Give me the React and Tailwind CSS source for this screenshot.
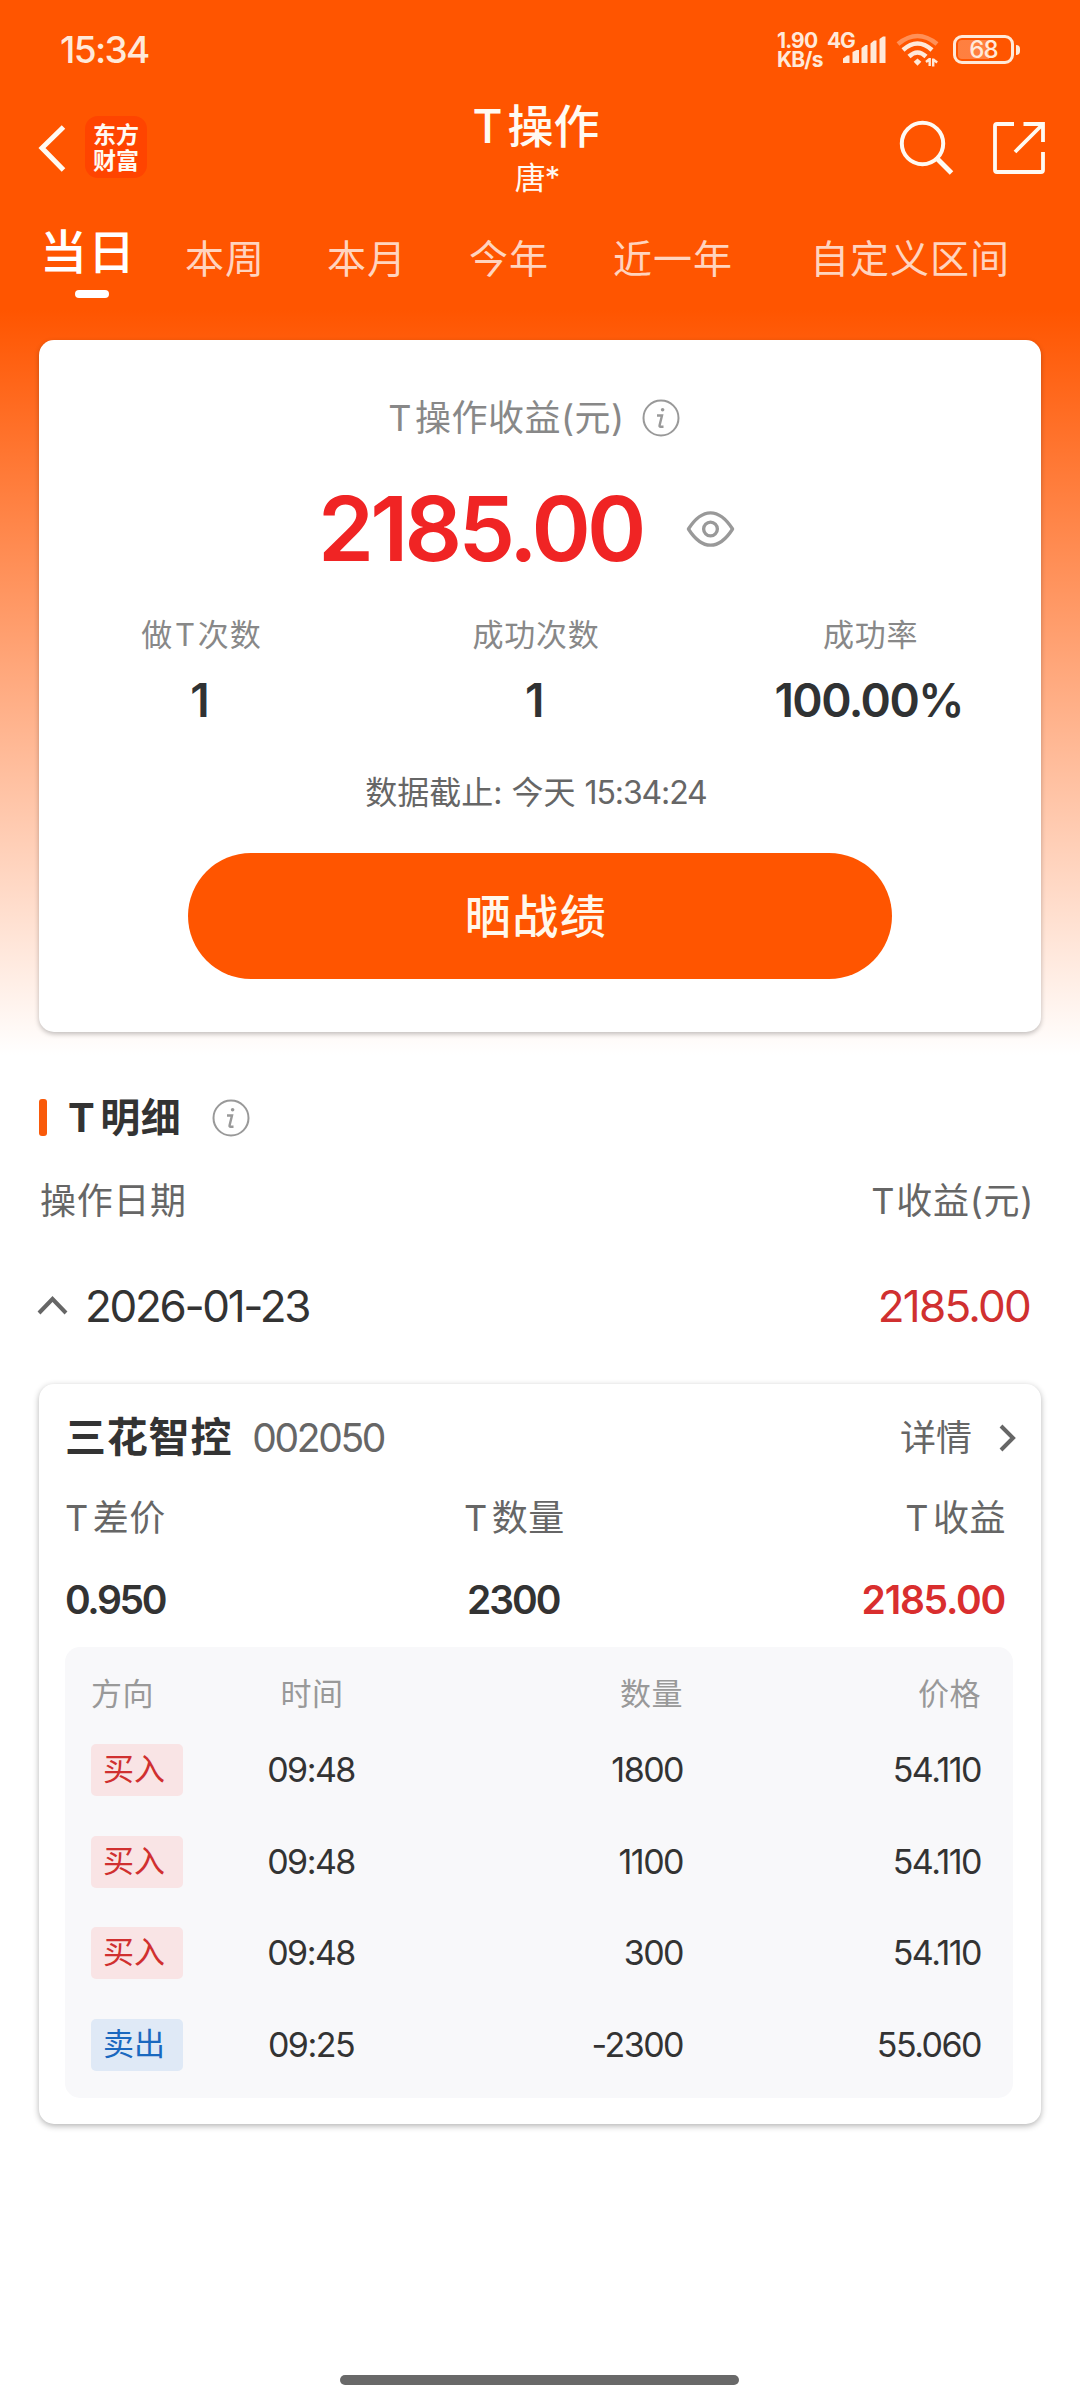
import React, { useState } from "react";

const tabs = [
  { label: "本周", className: "ml-[54px]" },
  { label: "本月", className: "ml-[62px]" },
  { label: "今年", className: "ml-[62px]" },
  { label: "近一年", className: "ml-[64px]" },
  { label: "自定义区间", className: "ml-[77px]" },
];

const trades = [
  { side: "buy", time: "09:48", amount: "1800", price: "54.110" },
  { side: "buy", time: "09:48", amount: "1100", price: "54.110" },
  { side: "buy", time: "09:48", amount: "300", price: "54.110" },
  { side: "sell", time: "09:25", amount: "-2300", price: "55.060" },
];

const InfoIcon = () => (
  <svg width="38" height="38" viewBox="0 0 38 38" fill="none" stroke="#999999">
    <circle cx="19" cy="19" r="17.5" strokeWidth="2" />
    <circle cx="20.6" cy="10.8" r="1.8" fill="#999999" stroke="none" />
    <path d="M15 16.5H20L17.6 26.2Q17.2 27.8 18.6 27.8H21.5" strokeWidth="2.400" />
  </svg>
);

const StatusBar = () => (
  <div className="flex h-[100px] items-center pl-[60px] pr-[60px] text-[#ffe9d9]">
    <span className="text-[37px] font-medium leading-10 tracking-[-0.045em]">15:34</span>
    <div className="ml-auto flex items-start">
      <div className="w-[50px] text-[21px] font-bold leading-[19px] tracking-[-0.04em]">
        <div>1.90</div>
        <div>KB/s</div>
      </div>
      <span className="w-[16px] text-[21px] font-bold leading-[19px] tracking-[-0.06em]">4G</span>
      <svg className="mt-[5px]" width="44" height="30" viewBox="0 0 44 30" fill="currentColor">
        <path d="M0 22.500l4-3h2.500v7.500h-6.500zM9.500 16l4-2h2.500v13h-6.500zM18.500 12l4-3h2v18h-6zM27.500 7.500l3.500-3h2.500v22.500h-6zM36.500 3l3.500-2.500h2.500v26.500h-6z" />
      </svg>
      <svg className="ml-[9px] mt-0.5" width="46" height="36" viewBox="0 0 46 36" fill="none" stroke="currentColor" strokeWidth="4.500">
        <path d="M2 11Q21.500 -5 41 11" opacity=".4" />
        <path d="M7 17Q21.500 4 36 17" />
        <path d="M13 23.500Q21.500 15.500 30 23.500" />
        <path d="M21.500 25.500l3.800 3.200-3.800 4-3.800-4z" fill="currentColor" stroke="none" />
        <path d="M30 29l3-2.500M33.700 25v8M37.200 33.500v-8M37.200 26.500l4 3" strokeWidth="2.400" />
      </svg>
      <div className="ml-[11px] mt-1 flex items-center gap-0.5">
        <div className="h-[29px] w-[61px] rounded-[9px] border-[3px] border-current p-0.5">
          <div className="h-[19px] w-[51px] rounded bg-linear-to-r from-white/25 from-60% to-transparent to-60% text-center text-[24px] font-medium leading-[20px] tracking-[-0.04em]">
            68
          </div>
        </div>
        <div className="h-[10px] w-1 rounded-r bg-current" />
      </div>
    </div>
  </div>
);

const Header = () => (
  <div className="flex h-[100px] text-[#fffaf2]">
    <div className="flex w-[400px] pl-[37px] pt-4">
      <svg className="mt-2" width="30" height="48" viewBox="0 0 30 48" fill="none" stroke="currentColor" strokeWidth="5">
        <path d="M26.500 3L5 24l21.500 22" />
      </svg>
      <div className="ml-[18px] h-[62px] w-[62px] rounded-[13px] bg-[#ff4400] pt-[6px] text-center text-[23px] font-bold leading-[26px]">
        <div>东方</div>
        <div>财富</div>
      </div>
    </div>
    <div className="flex w-[272px] flex-col items-center">
      <h1 className="h-[57px] whitespace-nowrap text-[46px] font-medium leading-[52px]">
        <span className="mr-[5px]">T</span>操作
      </h1>
      <div className="pl-0.5 text-[31px] leading-[52px] tracking-[-0.03em]">唐*</div>
    </div>
    <div className="ml-auto flex gap-[34px] pr-[35px] pt-5">
      <svg width="58" height="58" viewBox="0 0 58 58" fill="none" stroke="currentColor" strokeWidth="4">
        <circle cx="25.500" cy="23.500" r="20.700" />
        <path d="M39 37.500l15.500 15.500" strokeWidth="5" />
      </svg>
      <svg width="56" height="56" viewBox="0 0 56 56" fill="none" stroke="currentColor" strokeWidth="3.800">
        <path d="M25 4H8q-2 0-2 2v44q0 2 2 2h44q2 0 2-2V32" />
        <path d="M34.500 4H54v18M53 5L26 32" />
      </svg>
    </div>
  </div>
);

const Tabs = () => (
  <div className="flex h-[140px] whitespace-nowrap text-[39px] tracking-[1px] text-white/75">
    <div className="ml-[40px] w-[91px] pt-6">
      <div className="text-[47px] font-medium leading-[56px] tracking-[1px] text-white">当日</div>
      <div className="ml-[35px] mt-[10px] h-2 w-[34px] rounded-full bg-white" />
    </div>
    {tabs.map((t) => (
      <div key={t.label} className={"pt-[30px] leading-[58px] " + t.className}>
        {t.label}
      </div>
    ))}
  </div>
);

const Stat = ({ label, value }) => (
  <div className="flex flex-col items-center">
    <div className="h-[65px] text-[31px] leading-[36px] tracking-[0.8px] text-[#888888]">{label}</div>
    <div className="pr-1 text-[46px] font-[560] leading-[36px] tracking-[-0.033em] text-[#303233]">{value}</div>
  </div>
);

const SummaryCard = () => {
  const [hidden, setHidden] = useState(false);

  return (
    <div className="mx-[39px] h-[692px] rounded-[15px] bg-white pt-[56px] shadow-[0_2px_5px_rgba(0,0,0,0.25)]">
      <div className="flex h-[44px] items-center justify-center pr-[12px] text-[36px] tracking-[0.5px] text-[#888888]">
        <span>
          <span className="mr-[3px]">T</span>操作收益(元)
        </span>
        <span className="ml-[17px]">
          <InfoIcon />
        </span>
      </div>

      <div className="mt-[40px] flex h-[98px] items-center pl-[279px]">
        <span className="w-[367px] text-[90px] font-[560] leading-[98px] tracking-[-0.042em] text-[#f02424]">
          {hidden ? "****" : "2185.00"}
        </span>
        <button onClick={() => setHidden(!hidden)}>
          <svg width="51" height="40" viewBox="0 0 52 40" fill="none" stroke="#999999" strokeWidth="3.400">
            <path d="M3.500 20Q14 3.500 26 3.500T48.500 20Q38 36.500 26 36.500T3.500 20z" strokeLinejoin="round" />
            <circle cx="26" cy="20" r="7" />
          </svg>
        </button>
      </div>

      <div className="-ml-[5px] mr-[3px] mt-[39px] grid grid-cols-3">
        <Stat
          label={
            <>
              做<span className="mx-[2px]">T</span>次数
            </>
          }
          value="1"
        />
        <Stat label="成功次数" value="1" />
        <Stat label="成功率" value="100.00%" />
      </div>

      <div className="mt-[55px] pr-2 text-center text-[32px] leading-[40px] text-[#666666]">
        数据截止: 今天 <span className="tracking-[-0.035em]">15:34:24</span>
      </div>

      <button className="mx-auto mt-[40px] block h-[126px] w-[704px] rounded-full bg-[#ff5500] pr-2 text-[46px] font-medium tracking-[1.500px] text-[#fff8ec]">
        晒战绩
      </button>
    </div>
  );
};

const TradeRow = ({ trade }) => (
  <div className="flex h-[91.7px] items-start text-[34px] leading-[52px] tracking-[-0.045em] text-[#333333]">
    <div
      className={
        "h-[52px] w-[92px] rounded-[5px] pl-3 text-[31px] leading-[50px] tracking-normal " +
        (trade.side === "buy" ? "bg-[#f9e4e5] text-[#d03030]" : "bg-[#dfe9f6] text-[#1a68bf]")
      }
    >
      {trade.side === "buy" ? "买入" : "卖出"}
    </div>
    <div className="ml-[68px] w-[120px] text-center">{trade.time}</div>
    <div className="ml-auto w-[200px] text-right">{trade.amount}</div>
    <div className="w-[298px] text-right">{trade.price}</div>
  </div>
);

const StockCard = () => (
  <div className="mx-[39px] mt-[51px] h-[740px] rounded-[15px] bg-white pl-[26px] pr-[28px] pt-[26px] shadow-[0_2px_6px_rgba(0,0,0,0.3)]">
    <div className="flex h-14 items-center text-[#666666]">
      <span className="text-[41px] font-bold tracking-[0.8px] text-[#333333]">三花智控</span>
      <span className="ml-[20px] text-[39px] tracking-[-0.06em]">002050</span>
      <span className="ml-auto text-[36px]">详情</span>
      <svg className="ml-[27px] mr-[-4px]" width="18" height="30" viewBox="0 0 18 30" fill="none" stroke="#666666" strokeWidth="4">
        <path d="M2 3l12 12L2 27" />
      </svg>
    </div>

    <div className="mt-[26px] flex pr-[7px] text-[36px] leading-[52px] tracking-[0.5px] text-[#666666]">
      <div className="w-[399px]"><span className="mr-[4px]">T</span>差价</div>
      <div><span className="mr-[4px]">T</span>数量</div>
      <div className="ml-auto"><span className="mr-[4px]">T</span>收益</div>
    </div>
    <div className="mt-[30px] flex pr-[6px] text-[39px] font-[560] leading-[52px] text-[#333333]">
      <div className="w-[402px] tracking-[-0.06em]">0.950</div>
      <div className="tracking-[-0.052em]">2300</div>
      <div className="ml-auto pr-0.5 tracking-[-0.032em] text-[#d92e2e]">2185.00</div>
    </div>

    <div className="mt-[21px] h-[451px] rounded-[15px] bg-[#f8f8fa] pl-[26px] pr-[32px] pt-[22px]">
      <div className="flex h-[75px] text-[31px] leading-[50px] tracking-[0.5px] text-[#999999]">
        <div className="w-[92px]">方向</div>
        <div className="ml-[68px] w-[120px] pl-0.5 text-center">时间</div>
        <div className="ml-auto w-[200px] text-right">数量</div>
        <div className="w-[298px] text-right">价格</div>
      </div>
      {trades.map((trade, i) => (
        <TradeRow key={i} trade={trade} />
      ))}
    </div>
  </div>
);

const App = () => {
  return (
    <div className="flex h-[2400px] w-[1080px] flex-col bg-white bg-[linear-gradient(#ff5500_310px,#ffffff_1055px)] font-[Inter,'Noto_Sans_CJK_SC',sans-serif]">
      <StatusBar />
      <Header />
      <Tabs />
      <SummaryCard />

      {/* Details */}
      <div className="mt-[60px] flex h-[52px] items-center pl-[39px]">
        <div className="mb-0.5 h-[37px] w-2 rounded-[3px] bg-[#f95a0a]" />
        <h2 className="ml-[21px] text-[40px] font-bold tracking-[0.5px] text-[#333333]">
          <span className="mr-[5px]">T</span>明细
        </h2>
        <span className="ml-[31px]">
          <InfoIcon />
        </span>
      </div>
      <div className="mt-[31px] flex justify-between pl-[40px] pr-[46px] text-[36px] leading-[52px] tracking-[0.7px] text-[#666666]">
        <span>操作日期</span>
        <span>
          <span className="mr-[1px]">T</span>收益(元)
        </span>
      </div>
      <div className="mt-[52px] flex h-[54px] items-center pl-[37px] pr-[50px] text-[44px] tracking-[-0.04em] text-[#333333]">
        <svg className="mr-[17px]" width="31" height="22" viewBox="0 0 31 22" fill="none" stroke="#666666" strokeWidth="4">
          <path d="M2 18L15.500 4 29 18" />
        </svg>
        <span className="tracking-[-0.053em]">2026-01-23</span>
        <span className="ml-auto text-[#d03030]">2185.00</span>
      </div>

      <StockCard />

      {/* Home indicator */}
      <div className="ml-[340px] mb-[15px] mt-auto h-[10px] w-[399px] rounded-full bg-[#696969]" />
    </div>
  );
};

export default App;
